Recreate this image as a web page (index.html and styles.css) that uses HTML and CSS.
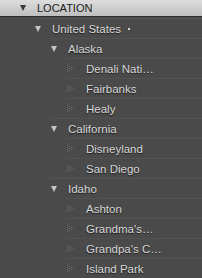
FILE: index.html
```html
<!DOCTYPE html>
<html>
<head>
<meta charset="utf-8">
<link rel="stylesheet" href="styles.css">
</head>
<body>
<div class="panel">
  <div class="header">
    <span class="tri tri-dark"></span>
    <span class="title">LOCATION</span>
  </div>
  <ul class="tree">
    <li class="row lvl0"><span class="tri"></span><span class="name">United States</span><span class="dot"></span></li>
    <li class="row lvl1"><span class="tri"></span><span class="name">Alaska</span></li>
    <li class="row lvl2"><svg class="leaf" width="7" height="8" viewBox="0 0 7 8"><g fill="#707070"><rect x="0" y="0" width="1" height="1"/><rect x="0" y="2" width="1" height="1"/><rect x="0" y="4" width="1" height="1"/><rect x="0" y="6" width="1" height="1"/><rect x="2" y="1" width="1" height="1"/><rect x="2" y="3" width="1" height="1"/><rect x="2" y="5" width="1" height="1"/><rect x="4" y="2" width="1" height="1"/><rect x="4" y="4" width="1" height="1"/><rect x="6" y="3" width="1" height="1"/></g></svg><span class="name">Denali Nati…</span></li>
    <li class="row lvl2"><svg class="leaf" width="7" height="8" viewBox="0 0 7 8"><g fill="#707070"><rect x="0" y="0" width="1" height="1"/><rect x="0" y="2" width="1" height="1"/><rect x="0" y="4" width="1" height="1"/><rect x="0" y="6" width="1" height="1"/><rect x="2" y="1" width="1" height="1"/><rect x="2" y="3" width="1" height="1"/><rect x="2" y="5" width="1" height="1"/><rect x="4" y="2" width="1" height="1"/><rect x="4" y="4" width="1" height="1"/><rect x="6" y="3" width="1" height="1"/></g></svg><span class="name">Fairbanks</span></li>
    <li class="row lvl2"><svg class="leaf" width="7" height="8" viewBox="0 0 7 8"><g fill="#707070"><rect x="0" y="0" width="1" height="1"/><rect x="0" y="2" width="1" height="1"/><rect x="0" y="4" width="1" height="1"/><rect x="0" y="6" width="1" height="1"/><rect x="2" y="1" width="1" height="1"/><rect x="2" y="3" width="1" height="1"/><rect x="2" y="5" width="1" height="1"/><rect x="4" y="2" width="1" height="1"/><rect x="4" y="4" width="1" height="1"/><rect x="6" y="3" width="1" height="1"/></g></svg><span class="name">Healy</span></li>
    <li class="row lvl1"><span class="tri"></span><span class="name">California</span></li>
    <li class="row lvl2"><svg class="leaf" width="7" height="8" viewBox="0 0 7 8"><g fill="#707070"><rect x="0" y="0" width="1" height="1"/><rect x="0" y="2" width="1" height="1"/><rect x="0" y="4" width="1" height="1"/><rect x="0" y="6" width="1" height="1"/><rect x="2" y="1" width="1" height="1"/><rect x="2" y="3" width="1" height="1"/><rect x="2" y="5" width="1" height="1"/><rect x="4" y="2" width="1" height="1"/><rect x="4" y="4" width="1" height="1"/><rect x="6" y="3" width="1" height="1"/></g></svg><span class="name">Disneyland</span></li>
    <li class="row lvl2"><svg class="leaf" width="7" height="8" viewBox="0 0 7 8"><g fill="#707070"><rect x="0" y="0" width="1" height="1"/><rect x="0" y="2" width="1" height="1"/><rect x="0" y="4" width="1" height="1"/><rect x="0" y="6" width="1" height="1"/><rect x="2" y="1" width="1" height="1"/><rect x="2" y="3" width="1" height="1"/><rect x="2" y="5" width="1" height="1"/><rect x="4" y="2" width="1" height="1"/><rect x="4" y="4" width="1" height="1"/><rect x="6" y="3" width="1" height="1"/></g></svg><span class="name">San Diego</span></li>
    <li class="row lvl1"><span class="tri"></span><span class="name">Idaho</span></li>
    <li class="row lvl2"><svg class="leaf" width="7" height="8" viewBox="0 0 7 8"><g fill="#707070"><rect x="0" y="0" width="1" height="1"/><rect x="0" y="2" width="1" height="1"/><rect x="0" y="4" width="1" height="1"/><rect x="0" y="6" width="1" height="1"/><rect x="2" y="1" width="1" height="1"/><rect x="2" y="3" width="1" height="1"/><rect x="2" y="5" width="1" height="1"/><rect x="4" y="2" width="1" height="1"/><rect x="4" y="4" width="1" height="1"/><rect x="6" y="3" width="1" height="1"/></g></svg><span class="name">Ashton</span></li>
    <li class="row lvl2"><svg class="leaf" width="7" height="8" viewBox="0 0 7 8"><g fill="#707070"><rect x="0" y="0" width="1" height="1"/><rect x="0" y="2" width="1" height="1"/><rect x="0" y="4" width="1" height="1"/><rect x="0" y="6" width="1" height="1"/><rect x="2" y="1" width="1" height="1"/><rect x="2" y="3" width="1" height="1"/><rect x="2" y="5" width="1" height="1"/><rect x="4" y="2" width="1" height="1"/><rect x="4" y="4" width="1" height="1"/><rect x="6" y="3" width="1" height="1"/></g></svg><span class="name">Grandma's…</span></li>
    <li class="row lvl2"><svg class="leaf" width="7" height="8" viewBox="0 0 7 8"><g fill="#707070"><rect x="0" y="0" width="1" height="1"/><rect x="0" y="2" width="1" height="1"/><rect x="0" y="4" width="1" height="1"/><rect x="0" y="6" width="1" height="1"/><rect x="2" y="1" width="1" height="1"/><rect x="2" y="3" width="1" height="1"/><rect x="2" y="5" width="1" height="1"/><rect x="4" y="2" width="1" height="1"/><rect x="4" y="4" width="1" height="1"/><rect x="6" y="3" width="1" height="1"/></g></svg><span class="name">Grandpa's C…</span></li>
    <li class="row lvl2"><svg class="leaf" width="7" height="8" viewBox="0 0 7 8"><g fill="#707070"><rect x="0" y="0" width="1" height="1"/><rect x="0" y="2" width="1" height="1"/><rect x="0" y="4" width="1" height="1"/><rect x="0" y="6" width="1" height="1"/><rect x="2" y="1" width="1" height="1"/><rect x="2" y="3" width="1" height="1"/><rect x="2" y="5" width="1" height="1"/><rect x="4" y="2" width="1" height="1"/><rect x="4" y="4" width="1" height="1"/><rect x="6" y="3" width="1" height="1"/></g></svg><span class="name">Island Park</span></li>
  </ul>
</div>
</body>
</html>
```

FILE: styles.css
```css
html, body {
  margin: 0;
  padding: 0;
  background: #4a4a4a;
}
.panel {
  width: 202px;
  height: 278px;
  overflow: hidden;
  background: #4a4a4a;
  font-family: "Liberation Sans", Arial, sans-serif;
  font-size: 11.5px;
}
.header {
  height: 16px;
  display: flex;
  align-items: center;
  padding-left: 20px;
  background: linear-gradient(#dedede, #bebebe);
  border-bottom: 1px solid #2c2c2c;
  margin-bottom: 1px;
}
.title {
  margin-left: 11px;
  color: #1c1c1c;
  font-size: 11px;
}
.tree {
  list-style: none;
  margin: 0;
  padding: 0;
}
.row {
  box-sizing: border-box;
  height: 20px;
  display: flex;
  align-items: center;
  border-top: 1px solid #525252;
  padding-left: 2px;
}
.lvl0 { margin-left: 33px; }
.lvl1 { margin-left: 49px; }
.lvl2 { margin-left: 66px; padding-left: 1px; }
.tri {
  width: 0;
  height: 0;
  border-left: 3.5px solid transparent;
  border-right: 3.5px solid transparent;
  border-top: 6px solid #c4c4c4;
  flex: none;
}
.tri-dark {
  border-top-color: #3a3a3a;
}
.leaf {
  flex: none;
  display: block;
}
.name {
  margin-left: 11px;
  color: #d8d8d8;
  text-shadow: 0 1px 1px rgba(0, 0, 0, 0.6);
  white-space: nowrap;
}
.lvl2 .name { margin-left: 12px; }
.dot {
  width: 2px;
  height: 2px;
  margin-left: 7px;
  background: #cfcfcf;
  flex: none;
}
```
